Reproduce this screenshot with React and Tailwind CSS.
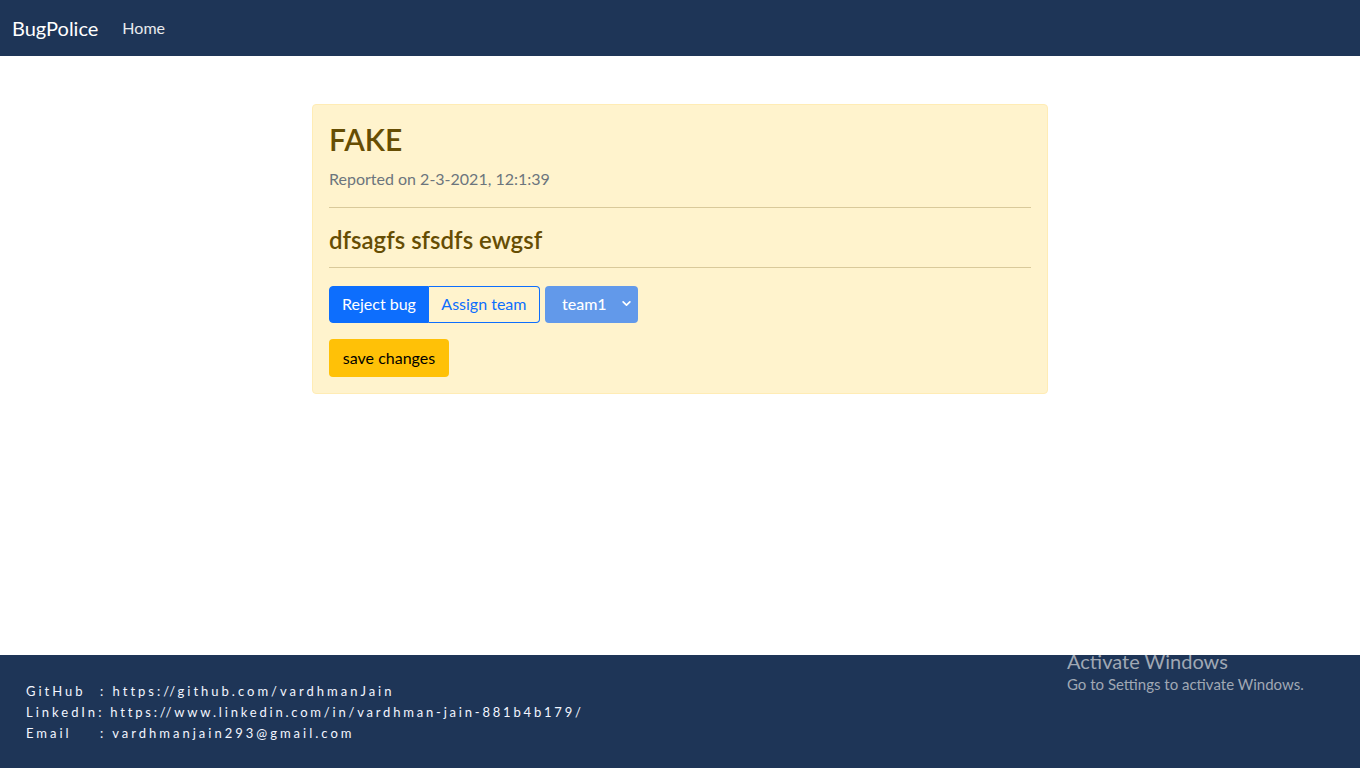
import React, { useState } from 'react';

const font = { fontFamily: 'Lato, "Open Sans", sans-serif' };

const App = () => {
  const [team, setTeam] = useState('team1');

  return (
    <div className="min-h-screen flex flex-col bg-white" style={font}>
      {/* Navbar */}
      <nav className="h-14 bg-[#1e3557] flex items-center px-3">
        <span className="text-white text-[20px] mr-6">BugPolice</span>
        <a className="text-white/90 text-[16px]">Home</a>
      </nav>

      {/* Bug card */}
      <main className="flex-1 pt-12">
        <div className="w-[736px] mx-auto bg-[#fff3cd] border border-[#ffecb5] rounded p-4 text-[#664d03]">
          <h2 className="text-[30px] font-semibold leading-tight mb-2">FAKE</h2>
          <p className="text-[16px] text-[#6c757d] mb-4">Reported on 2-3-2021, 12:1:39</p>
          <hr className="border-[#664d03]/25 my-0" />
          <h4 className="text-[24px] font-semibold leading-tight pt-[17px] pb-[12px]">dfsagfs sfsdfs ewgsf</h4>
          <hr className="border-[#664d03]/25 mb-[18px]" />
          <div className="flex items-center gap-[5px] mb-4">
            <div className="flex">
              <button className="h-[37px] px-3 bg-[#0d6efd] text-white text-[16px] rounded-l border border-[#0d6efd]">Reject bug</button>
              <button className="h-[37px] w-[111px] px-3 text-[#0d6efd] text-[16px] rounded-r border border-[#0d6efd] border-l-0">Assign team</button>
            </div>
            <div className="relative">
              <select
                value={team}
                onChange={(e) => setTeam(e.target.value)}
                className="appearance-none h-[37px] w-[93px] pl-[17px] pr-7 bg-[#6299ea] text-white text-[16px] font-medium rounded outline-none"
              >
                <option value="team1">team1</option>
                <option value="team2">team2</option>
              </select>
              <svg className="absolute right-[6px] top-[13px] pointer-events-none" width="11" height="9" viewBox="0 0 16 16">
                <path d="M2 5l6 6 6-6" stroke="white" strokeWidth="3" fill="none" strokeLinecap="round" strokeLinejoin="round" />
              </svg>
            </div>
          </div>
          <button className="h-[38px] w-[120px] bg-[#ffc107] text-black text-[16px] rounded">save changes</button>
        </div>
      </main>

      {/* Footer */}
      <footer className="h-[113px] bg-[#1e3557] relative pt-[26px] pl-[26px]">
        <div className="text-[13px] leading-[21px] tracking-[3px] text-[#f2f6ff]">
          <div className="flex"><span className="w-[74px]">GitHub</span><span>: https://github.com/vardhmanJain</span></div>
          <div className="flex"><span>LinkedIn</span><span className="tracking-[2.8px]">: https://www.linkedin.com/in/vardhman-jain-881b4b179/</span></div>
          <div className="flex"><span className="w-[74px]">Email</span><span>: vardhmanjain293@gmail.com</span></div>
        </div>
        <div className="absolute left-[1067px] top-[-7px] text-[#a0a8b4]">
          <div className="text-[20px] leading-[26px]">Activate Windows</div>
          <div className="text-[15px] leading-[20px]">Go to Settings to activate Windows.</div>
        </div>
      </footer>
    </div>
  );
};

export default App;
